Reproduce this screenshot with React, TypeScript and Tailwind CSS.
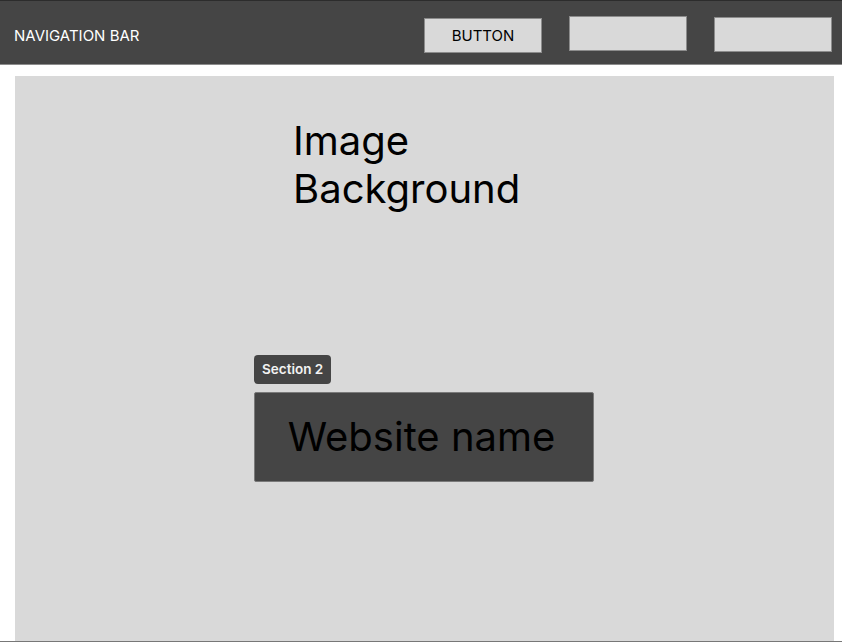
import React from "react";

const navButtons = [
  { label: "BUTTON", offset: "mt-[17px]" },
  { label: "", offset: "mt-[15px]" },
  { label: "", offset: "mt-[16px]" },
];

const App: React.FC = () => {
  return (
    <div className="min-h-[642px] w-[842px] bg-white font-['Inter',sans-serif]">
      {/* Top navigation */}
      <header className="flex h-[65px] items-start border-t border-b border-t-[#2c2c2c] border-b-[#8c8c8c] bg-[#454545] pr-[10px] pl-[14px]">
        <div className="mt-[25px] text-[15px] leading-[20px] text-white">
          NAVIGATION BAR
        </div>
        <div className="ml-auto flex items-start gap-[27px]">
          {navButtons.map((btn, i) => (
            <button
              key={i}
              className={`${btn.offset} flex h-[35px] w-[118px] items-center justify-center border border-[#8c8c8c] bg-[#d9d9d9] pt-[2px] text-[15px] text-black`}
            >
              {btn.label}
            </button>
          ))}
        </div>
      </header>

      {/* Hero area */}
      <main className="mx-[15px] mt-[11px] flex h-[565px] w-[819px] flex-col bg-[#d9d9d9]">
        <h1 className="mt-[41px] pl-[278px] text-[40px] leading-[48px] font-normal text-black">
          Image
          <br />
          Background
        </h1>

        <div className="mt-[142px] ml-[239px] flex w-[340px] flex-col items-start">
          <span className="flex h-[29px] items-center rounded-[4px] bg-[#454545] px-[8px] text-[13.5px] font-semibold text-[#f2f2f2]">
            Section 2
          </span>
          <div className="mt-[8px] flex h-[90px] w-[340px] items-center justify-center rounded-[2px] border border-[#7a7a7a] bg-[#454545] pr-[5px]">
            <span className="text-[40px] leading-[48px] text-black">
              Website name
            </span>
          </div>
        </div>
      </main>

      <div className="h-px w-full bg-[#777777]" />
    </div>
  );
};

export default App;
